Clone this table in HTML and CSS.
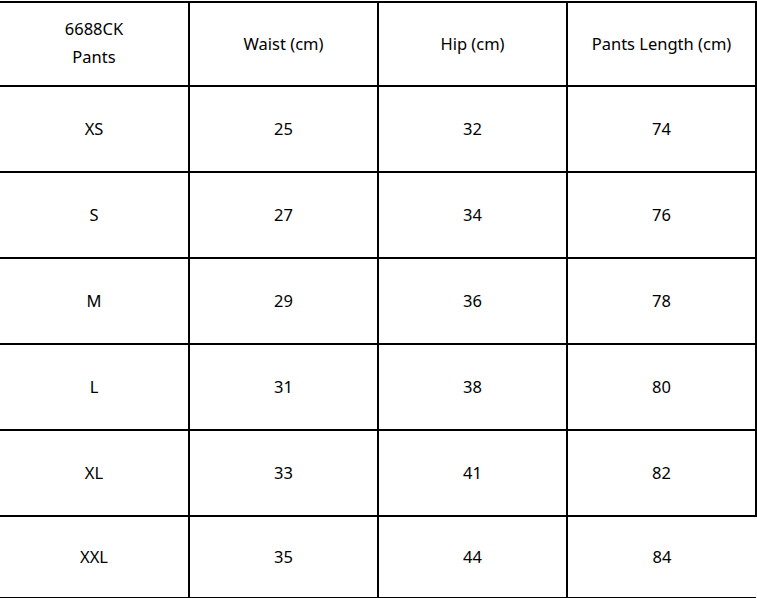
FILE: index.html
```html
<!DOCTYPE html>
<html>
<head>
<meta charset="utf-8">
<link rel="stylesheet" href="styles.css">
</head>
<body>
<table class="size-table">
  <tr class="head">
    <td class="c1"><div class="two">6688CK<br>Pants</div></td>
    <td>Waist (cm)</td>
    <td>Hip (cm)</td>
    <td class="c4">Pants Length (cm)</td>
  </tr>
  <tr><td class="c1">XS</td><td>25</td><td>32</td><td class="c4">74</td></tr>
  <tr><td class="c1">S</td><td>27</td><td>34</td><td class="c4">76</td></tr>
  <tr><td class="c1">M</td><td>29</td><td>36</td><td class="c4">78</td></tr>
  <tr><td class="c1">L</td><td>31</td><td>38</td><td class="c4">80</td></tr>
  <tr><td class="c1">XL</td><td>33</td><td>41</td><td class="c4">82</td></tr>
  <tr class="last"><td class="c1">XXL</td><td>35</td><td>44</td><td class="c4 open">84</td></tr>
</table>
</body>
</html>
```

FILE: styles.css
```css
html, body {
  margin: 0;
  padding: 0;
  background: #ffffff;
}
body {
  font-family: "Noto Sans", "Open Sans", sans-serif;
  font-size: 16.5px;
  color: #000000;
}
.size-table {
  border-collapse: collapse;
  table-layout: fixed;
  width: 757px;
  margin-top: 1px;
}
.size-table td {
  border: 2px solid #000000;
  width: 189px;
  height: 86px;
  padding: 0 0 2px 0;
  text-align: center;
  vertical-align: middle;
  box-sizing: border-box;
}
.size-table td.c1 {
  border-left: none;
}
.size-table .head td {
  height: 84px;
}
.size-table .last td {
  height: 82px;
}
.size-table td.open {
  border-right: none;
}
.two {
  line-height: 28px;
}
```
